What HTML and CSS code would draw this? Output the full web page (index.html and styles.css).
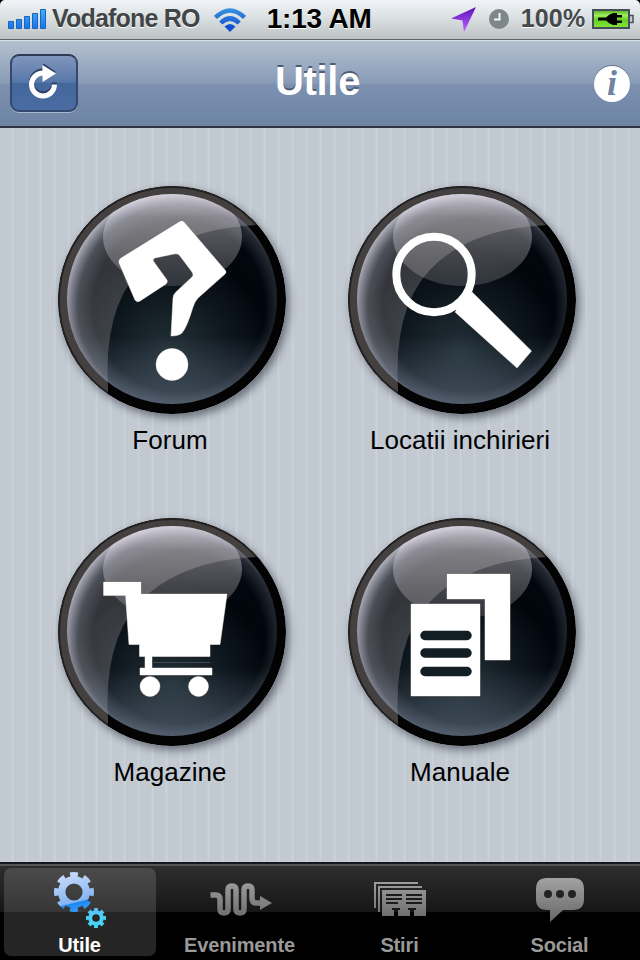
FILE: index.html
```
<!DOCTYPE html>
<html lang="ro">
<head>
	<meta charset="UTF-8">
	<title>Utile</title>
	<link rel="stylesheet" href="styles.css">
</head>
<body>
<!-- shared gradients and the glass ball -->
<svg class="defs" width="0" height="0">
	<defs>
		<linearGradient id="blue" x1="0" y1="0" x2="0" y2="1"><stop offset="0" stop-color="#3fb0fa"/><stop offset="1" stop-color="#1572ee"/></linearGradient>
		<linearGradient id="wifi" gradientUnits="userSpaceOnUse" x1="0" y1="0" x2="0" y2="24"><stop offset="0" stop-color="#3a94e4"/><stop offset="1" stop-color="#0a44cc"/></linearGradient>
		<linearGradient id="purple" x1="0" y1="0" x2="0" y2="1"><stop offset="0" stop-color="#5a10b8"/><stop offset="1" stop-color="#c062ff"/></linearGradient>
		<linearGradient id="green" x1="0" y1="0" x2="0" y2="1"><stop offset="0" stop-color="#4fae1c"/><stop offset=".3" stop-color="#a2ec5e"/><stop offset=".55" stop-color="#64cf20"/><stop offset="1" stop-color="#86e83c"/></linearGradient>
		<linearGradient id="gray" gradientUnits="userSpaceOnUse" x1="0" y1="0" x2="0" y2="50"><stop offset="0" stop-color="#b0b0b0"/><stop offset="1" stop-color="#6c6c6c"/></linearGradient>
		<linearGradient id="gear" gradientUnits="userSpaceOnUse" x1="14" y1="2" x2="24" y2="42"><stop offset="0" stop-color="#c6dbfa"/><stop offset=".7" stop-color="#84b4f0"/><stop offset=".73" stop-color="#1e86f4"/><stop offset="1" stop-color="#3ea4fa"/></linearGradient>
		<linearGradient id="cog" gradientUnits="userSpaceOnUse" x1="0" y1="37" x2="0" y2="58"><stop offset="0" stop-color="#58c4ff"/><stop offset="1" stop-color="#40dcec"/></linearGradient>
		<radialGradient id="glass" gradientUnits="userSpaceOnUse" cx="112" cy="166" r="118"><stop offset="0" stop-color="#233138"/><stop offset=".45" stop-color="#111a21"/><stop offset=".85" stop-color="#01060c"/><stop offset="1" stop-color="#02070e"/></radialGradient>
		<radialGradient id="rim" gradientUnits="userSpaceOnUse" cx="121" cy="120" r="116"><stop offset=".74" stop-color="#c8cbe4" stop-opacity="0"/><stop offset=".87" stop-color="#bcc0d8" stop-opacity=".18"/><stop offset="1" stop-color="#eceaf6" stop-opacity=".75"/></radialGradient>
		<linearGradient id="bottom" gradientUnits="userSpaceOnUse" x1="0" y1="150" x2="0" y2="218"><stop offset="0" stop-color="#7a8ba0" stop-opacity="0"/><stop offset="1" stop-color="#7a8ba0" stop-opacity=".45"/></linearGradient>
		<linearGradient id="shine" x1="0" y1="0" x2="0" y2="1"><stop offset="0" stop-color="#fffaff" stop-opacity=".75"/><stop offset=".3" stop-color="#fff8fc" stop-opacity=".38"/><stop offset="1" stop-color="#fff8fc" stop-opacity=".15"/></linearGradient>
		<clipPath id="ballClip"><circle cx="114" cy="113" r="105"/></clipPath>
		<clipPath id="ringClip"><circle cx="114" cy="114" r="114"/></clipPath>
		<symbol id="ball" viewBox="0 0 228 228">
			<circle cx="114" cy="114" r="114" fill="#030303"/>
			<g clip-path="url(#ringClip)"><path d="M0 0H228V39H200Q130 42 90 76Q45 115 50 201V228H0Z" fill="#454040"/></g>
			<circle cx="114" cy="114" r="113" fill="none" stroke="#000" stroke-opacity=".5" stroke-width="2"/>
			<circle cx="114" cy="113" r="105" fill="url(#glass)"/>
			<g clip-path="url(#ballClip)">
				<path d="M0 0H228V39H200Q130 42 90 76Q45 115 50 201V228H0Z" fill="#fff4f6" fill-opacity=".2"/>
				<ellipse cx="114.500" cy="51" rx="69.500" ry="49" fill="url(#shine)"/>
			</g>
			<circle cx="114" cy="113" r="105" fill="url(#bottom)"/>
			<circle cx="114" cy="113" r="105" fill="url(#rim)"/>
		</symbol>
	</defs>
</svg>

<div class="phone">
	<div class="status">
		<svg class="signal" width="38" height="22" viewBox="0 0 38 22" fill="url(#blue)" stroke="#1d63b8" stroke-width="1">
			<path d="M.5 13.500h5v7h-5zM8.500 11.500h5v9h-5zM16.500 8.500h5v12h-5zM24.500 5.500h5v15h-5zM32.500 1.500h5v19h-5z"/>
		</svg>
		<span class="carrier">Vodafone RO</span>
		<svg class="wifi" width="32" height="24" viewBox="0 0 32 24" fill="none" stroke="url(#wifi)" stroke-width="4.500">
			<path d="M1.500 9.500Q16-4.500 30.500 9.500"/>
			<path d="M6.800 15Q16 6 25.200 15"/>
			<path d="M16 24L10.500 18.500Q16 13.500 21.500 18.500Z" fill="#0c4fd0" stroke="none"/>
		</svg>
		<span class="time">1:13 AM</span>
		<svg class="arrow" width="26" height="26" viewBox="0 0 26 26"><path d="M0 11.500L25 0L13 25L11.500 13.500Z" fill="url(#purple)"/></svg>
		<svg class="clock" width="20" height="20" viewBox="0 0 20 20"><circle cx="10" cy="10" r="10" fill="#7d8689"/><path d="M10.500 4V10.500H5" fill="none" stroke="#f4f6f7" stroke-width="2"/></svg>
		<span class="percent">100%</span>
		<svg class="battery" width="42" height="20" viewBox="0 0 42 20">
			<rect x="1" y="1" width="36" height="18" fill="url(#green)" stroke="#454f5c" stroke-width="2"/>
			<path d="M38 6.500H41V13.500H38" fill="#c6cdd1" stroke="#454f5c" stroke-width="1.500"/>
			<path d="M6 8.500H14Q17 5 21 4H25V6H30V8.500H25V11.500H30V14H25V16H21Q17 15 14 11.500H6Z"/>
		</svg>
	</div>

	<div class="navbar">
		<a href="#" class="refresh">
			<svg width="32" height="38" viewBox="0 0 32 38">
				<path d="M15 8.500A11.500 11.500 0 1 0 26.500 20" fill="none" stroke="#2c3e62" stroke-width="5" transform="translate(0 -1.500)"/>
				<path d="M15 -1L28 8L15 17Z" fill="#2c3e62"/>
				<path d="M15 9A11.500 11.500 0 1 0 26.500 20.500" fill="none" stroke="#fff" stroke-width="5"/>
				<path d="M14.500 1L28 9.500L14.500 18Z" fill="#fff"/>
			</svg>
		</a>
		<h1>Utile</h1>
		<a href="#" class="info">i</a>
	</div>

	<div class="content">
		<a href="#" class="item">
			<svg class="ball" viewBox="0 0 228 228">
				<use href="#ball"/>
				<g class="glyph">
					<path d="M126 36L167 84Q169 86 167 88L140 112Q137 115 135 121Q129 141 124 147Q121 150 113 150L115 112Q115 109 118 106L134 91Q136 89 134 86L122 70Q120 67 116 68L97 72Q94 73 96 76L109 94Q110 96 108 98L82 115Q79 117 77 114L61 77Q60 74 63 72L121 36Q124 34 126 36Z"/>
					<circle cx="114" cy="178.500" r="16"/>
				</g>
			</svg>
			<span>Forum</span>
		</a>
		<a href="#" class="item">
			<svg class="ball" viewBox="0 0 228 228">
				<use href="#ball"/>
				<path class="glyph" d="M124 106L183.500 165L169 182L107 126Z"/>
				<circle cx="86" cy="88.500" r="37.700" fill="none" stroke="#fff" stroke-width="8"/>
				<path d="M112 112L124 108L130 114L114 130L108 124Z" fill="#fff"/>
			</svg>
			<span>Locatii inchirieri</span>
		</a>
		<a href="#" class="item">
			<svg class="ball" viewBox="0 0 228 228">
				<use href="#ball"/>
				<g class="glyph">
					<path d="M45.500 64H83V76H169L162 126.500H152V138.500H94V150H154V157H82V150H87V138.500H81.500V126.500H71L67.500 77.500H45.500Z"/>
					<circle cx="92" cy="168.500" r="10"/>
					<circle cx="140.500" cy="168.500" r="10"/>
				</g>
				<path d="M94 144.500H152" stroke="#3f494e" stroke-width="1"/>
			</svg>
			<span>Magazine</span>
		</a>
		<a href="#" class="item">
			<svg class="ball" viewBox="0 0 228 228">
				<use href="#ball"/>
				<g class="glyph">
					<path d="M99 56H162V142H137V81H99Z"/>
					<path d="M63 86H132V178H63Z"/>
				</g>
				<path d="M77 117.500H119M77 135H119M77 153.500H119" stroke="#131d24" stroke-width="9.500" stroke-linecap="round"/>
			</svg>
			<span>Manuale</span>
		</a>
	</div>

	<div class="tabbar">
		<a href="#" class="tab active">
			<svg width="152" height="66" viewBox="-50 -4 152 66" fill="none">
				<g stroke="url(#gear)">
					<circle cx="20" cy="20" r="12.300" stroke-width="7.400"/>
					<circle cx="20" cy="20" r="17.500" stroke-width="5" pathLength="16" stroke-dasharray="1.150 .85" stroke-dashoffset=".575"/>
				</g>
				<g stroke="url(#cog)">
					<circle cx="42" cy="46" r="5.800" stroke-width="4"/>
					<circle cx="42" cy="46" r="8.500" stroke-width="3" pathLength="16" stroke-dasharray="1.150 .85" stroke-dashoffset=".575"/>
				</g>
			</svg>
			<span>Utile</span>
		</a>
		<a href="#" class="tab">
			<svg width="152" height="66" viewBox="164 868 152 66">
				<g transform="translate(0 868)" fill="none" stroke="url(#gray)" stroke-width="5.500">
					<path d="M210.500 27H216Q220 27 220 32V41Q220 45 224 45Q228 45 228 41V22Q228 18 232 18Q236 18 236 22V41Q236 45 240 45Q244 45 244 41V22Q244 18 248 18Q252 18 252 22V30Q252 35 256 35H261"/>
					<path d="M260 28L272 35L260 42Z" fill="url(#gray)" stroke="none"/>
				</g>
			</svg>
			<span>Evenimente</span>
		</a>
		<a href="#" class="tab">
			<svg width="152" height="66" viewBox="324 0 152 66">
				<g fill="none" stroke="url(#gray)" stroke-width="2">
					<path d="M375 40V15H418"/>
					<path d="M379 44V19H422"/>
				</g>
				<path d="M382 22H426V48H414V42H416V40H408V42H410V48H398V42H400V40H392V42H394V48H382Z" fill="url(#gray)"/>
				<path d="M386 27H402M386 31H402M386 35H398M406 27H422M406 31H422M406 35H422" stroke="#1b1b1b" stroke-width="2"/>
			</svg>
			<span>Stiri</span>
		</a>
		<a href="#" class="tab">
			<svg width="152" height="66" viewBox="484 0 152 66">
				<path d="M547 10H573Q584 10 584 21V31Q584 42 573 42H563L550 54V42H547Q536 42 536 31V21Q536 10 547 10Z" fill="url(#gray)"/>
				<g fill="#222"><circle cx="548" cy="26" r="4"/><circle cx="560" cy="26" r="4"/><circle cx="572" cy="26" r="4"/></g>
			</svg>
			<span>Social</span>
		</a>
	</div>
</div>
</body>
</html>
```
FILE: styles.css
```
body,h1{margin:0;padding:0}
body{font-family:"Liberation Sans", Arial, sans-serif;background:#000;}
a{text-decoration:none;color:inherit;}
svg{display:block;flex:none;}
.defs{position:absolute;}

.phone{
    width:640px;
    height:960px;
    display:flex;
    flex-direction:column;
    overflow:hidden;
}

/* status bar */
.status{
    height:40px;
    box-sizing:border-box;
    padding:0 6px 2px 8px;
    display:flex;
    align-items:center;
    border-bottom:1px solid #5f6669;
    border-radius:5px 5px 0 0;
    background:linear-gradient(#f1f5f9, #d8dddf 50%, #bcc3c4);
    font-weight:bold;
    white-space:nowrap;
    text-shadow:0 1px 0 #fff;
}
.carrier{
    width:148px;
    margin-left:6px;
    font-size:25px;
    letter-spacing:-.8px;
    color:#414547;
}
.wifi{margin-left:14px;margin-top:2px;}
.time{
    width:105px;
    margin-left:21px;
    font-size:28px;
    letter-spacing:-.2px;
    color:#000;
}
.arrow{margin-left:79px;margin-top:3px;}
.clock{margin-left:12px;margin-top:1px;}
.percent{
    width:66px;
    margin-left:12px;
    font-size:25px;
    letter-spacing:.2px;
    color:#46494b;
}
.battery{margin-left:6px;margin-top:1px;}

/* title bar */
.navbar{
    height:88px;
    box-sizing:border-box;
    padding:0 10px;
    display:flex;
    justify-content:space-between;
    align-items:center;
    border-top:1px solid #d9e0e8;
    border-bottom:2px solid #2d3642;
    background:linear-gradient(#b3c0cf, #889bb6 50%, #7d90af 51%, #6d84a5);
}
.refresh{
    width:68px;
    height:58px;
    box-sizing:border-box;
    display:flex;
    justify-content:center;
    align-items:center;
    margin-top:-2px;
    border:2px solid #35496f;
    border-top-color:#2c3a55;
    border-radius:9px;
    background:linear-gradient(#8196bc, #5777a9 49%, #43669b 50%, #4a6ca2);
    box-shadow:0 1px 0 #a9b9d0;
}
.navbar h1{
    margin-right:37px;
    font-size:40px;
    line-height:46px;
    letter-spacing:-.3px;
    color:#fff;
    text-shadow:0 -2px 0 #4e5c75;
    padding-bottom:6px;
}
.info{
    width:36px;
    height:36px;
    border-radius:50%;
    background:#fff;
    box-shadow:0 -1px 0 #64748e;
    color:#6f84a4;
    font:italic bold 36px/34px "Liberation Serif", serif;
    text-align:center;
}

/* menu */
.content{
    height:734px;
    box-sizing:border-box;
    padding:58px 0 0 25px;
    display:grid;
    grid-template-columns:290px 290px;
    grid-template-rows:332px 332px;
    background:repeating-linear-gradient(90deg, #c2c9d1 0, #c2c9d1 11px, #cad2d9 12px, #cad2d9 13px, #c2c9d1 14px);
}
.item{
    display:flex;
    flex-direction:column;
    align-items:center;
    font-size:26px;
    line-height:30px;
    letter-spacing:.05px;
    color:#000;
}
.ball{
    width:228px;
    height:228px;
    margin:0 0 11px 4px;
    border-radius:50%;
    box-shadow:3px 4px 8px rgba(30,35,45,.55);
}
.glyph{fill:#fff;stroke:#8d8582;stroke-width:1;paint-order:stroke;}

/* tabs */
.tabbar{
    height:98px;
    box-sizing:border-box;
    padding:4px 4px 0;
    display:flex;
    gap:8px;
    border-top:2px solid #15191e;
    background:linear-gradient(#555 0, #555 2px, #2e2e2e 2px, #161616 48px, #000 48px);
}
.tab{
    width:152px;
    height:88px;
    border-radius:7px;
    font-size:20px;
    font-weight:bold;
    line-height:22px;
    letter-spacing:-.15px;
    text-align:center;
    color:#999;
}
.tab span{margin-right:1px;}
.tab.active{
    color:#fff;
    background:linear-gradient(#4a4a4a, #363636 44px, #252525 44px, #252525);
}
```
